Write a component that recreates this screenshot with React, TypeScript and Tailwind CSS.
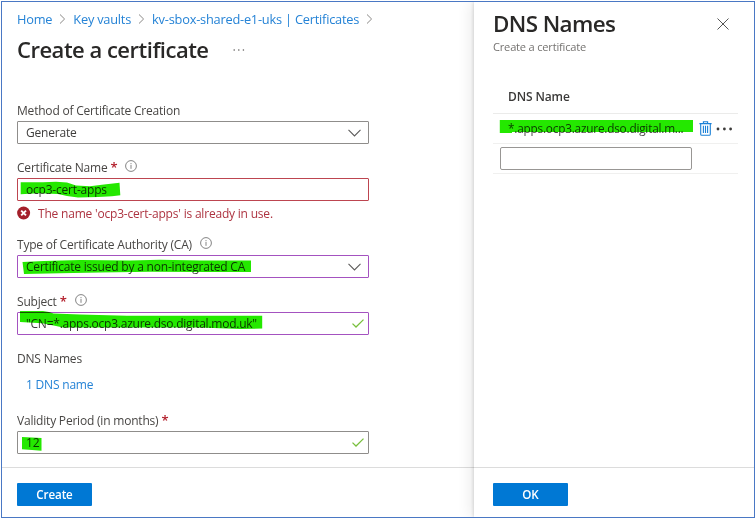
import type { ReactNode } from 'react';

function Crumb({ children }: { children: string }) {
  return (
    <>
      <a className="text-[#2583d6]">{children}</a>
      <svg className="mx-[7px] h-[10px] w-[7px]" viewBox="0 0 7 10" fill="none" stroke="#8a8886" strokeWidth="1">
        <path d="M1 0.5 5.6 5 1 9.5" />
      </svg>
    </>
  );
}

function InfoIcon() {
  return (
    <svg className="size-[12px]" viewBox="0 0 12 12" fill="none" stroke="#767676" strokeWidth="0.9">
      <circle cx="6" cy="6" r="5.4" />
      <path d="M6 5v3.8M6 3.1v1.1" />
    </svg>
  );
}

function Chevron() {
  return (
    <svg className="mr-[7px] h-[8px] w-[13px]" viewBox="0 0 13 8" fill="none" stroke="#5c5b5a" strokeWidth="1.1">
      <path d="M0.5 0.9 6.5 6.9 12.5 0.9" />
    </svg>
  );
}

function Check() {
  return (
    <svg className="mr-[4px] h-[9px] w-[12px]" viewBox="0 0 12 9" fill="none" stroke="#78bf3c" strokeWidth="1.3">
      <path d="M0.5 4.6 4 8 11.5 0.6" />
    </svg>
  );
}

function Label({ children, required, info }: { children: string; required?: boolean; info?: boolean }) {
  return (
    <div className="flex h-4 items-start leading-4 text-[#484644]">
      <span className="pt-px">{children}</span>
      {required && <span className="ml-[3px] text-[13px] font-semibold text-[#b3202c]">*</span>}
      {info && (
        <span className="mt-px ml-[8px]">
          <InfoIcon />
        </span>
      )}
    </div>
  );
}

function Field({ children, className, icon }: { children: ReactNode; className: string; icon?: ReactNode }) {
  return (
    <div className={'flex h-[23px] w-[352px] items-center justify-between rounded-[1px] border pl-[8px] ' + className}>
      <span className="pt-px">{children}</span>
      {icon}
    </div>
  );
}

/* Marker strokes drawn over the entered values. */
function Highlights() {
  return (
    <svg className="pointer-events-none absolute top-0 left-0 h-[519px] w-[756px] mix-blend-multiply" viewBox="0 0 756 519" fill="#24e800">
      <path d="M20.7 182.3H43L56 181.7 67 182.6 76 185.4 90 186.2 104 184.4 119.5 182.7 120.3 195.2 112 196.2 98 197 78 197.6 67 196 58 194 38 193.2 20.7 194.2Z" />
      <path d="M22.5 262 44 261 80 260 130 260.6 160 259.8 200 260.4H251V272H196L150 271.7 100 272.4 60 273.2 24 274Z" />
      <path d="M20 311H43L49 312 53.5 313.6 80 314.4 127 315.8H262.2V328.6L240 329 200 327.6H63L56 326 42 323.2 20 322Z" />
      <path d="M22 437 41.5 438V450.7L32 450 22 449.2Z" />
      <path d="M499.8 120H693V132H512V133H499.8Z" />
    </svg>
  );
}

export default function App() {
  return (
    <div className="relative h-[519px] w-[756px] bg-white p-px font-['Open_Sans','Noto_Sans',sans-serif] whitespace-nowrap">
      <div className="flex h-[517px] w-[754px] overflow-hidden border border-[#4a78c4]">
        <main className="flex w-[472px] flex-col">
          <div className="flex h-[465px] flex-col pl-[15px] text-[12px] leading-4 tracking-[-0.2px] text-[#3f3e3d]">
            <nav className="mt-[9px] flex h-4 items-center text-[12.8px] leading-4 tracking-[-0.22px]">
              <Crumb>Home</Crumb>
              <Crumb>Key vaults</Crumb>
              <Crumb>kv-sbox-shared-e1-uks | Certificates</Crumb>
            </nav>
            <div className="mt-[8px] flex h-7 items-center">
              <h1 className="text-[22px] leading-7 font-semibold tracking-[-0.5px] text-[#292827]">Create a certificate</h1>
              <svg className="mt-[2px] ml-[24px] h-[2px] w-[12px]" viewBox="0 0 12 2" fill="#605e5c">
                <circle cx="1.2" cy="1" r="0.8" />
                <circle cx="5.8" cy="1" r="0.8" />
                <circle cx="10.4" cy="1" r="0.8" />
              </svg>
            </div>

            <div className="mt-[39px] flex flex-col gap-[3px]">
              <Label>Method of Certificate Creation</Label>
              <Field className="border-[#8f8d8b]" icon={<Chevron />}>Generate</Field>
            </div>

            <div className="mt-[15px] flex flex-col gap-[3px]">
              <Label required info>Certificate Name</Label>
              <Field className="border-[#bd4550]">ocp3-cert-apps</Field>
              <div className="mt-px flex h-4 items-center text-[#ad3340]">
                <svg className="mr-[7px] size-[14px]" viewBox="0 0 14 14">
                  <circle cx="6.6" cy="7" r="6.5" fill="#a4202b" />
                  <path d="M4.2 4.6 9 9.4M9 4.6 4.2 9.4" stroke="#fff" strokeWidth="1.9" />
                </svg>
                <span className="pt-[2px]">The name &apos;ocp3-cert-apps&apos; is already in use.</span>
              </div>
            </div>

            <div className="mt-[15px] flex flex-col gap-[3px]">
              <Label info>Type of Certificate Authority (CA)</Label>
              <Field className="border-[#a452c0]" icon={<Chevron />}>Certificate issued by a non-integrated CA</Field>
            </div>

            <div className="mt-[15px] flex flex-col gap-[3px]">
              <Label required info>Subject</Label>
              <Field className="border-[#a452c0]" icon={<Check />}>
                <span className="tracking-[-0.24px]">&quot;CN=*.apps.ocp3.azure.dso.digital.mod.uk&quot;</span>
              </Field>
            </div>

            <div className="mt-[15px] flex flex-col gap-[10px]">
              <Label>DNS Names</Label>
              <a className="ml-[9px] h-4 pt-px text-[#2583d6]">1 DNS name</a>
            </div>

            <div className="mt-[20px] flex flex-col gap-[3px]">
              <Label required>Validity Period (in months)</Label>
              <Field className="border-[#8f8d8b]" icon={<Check />}>12</Field>
            </div>
          </div>
          <footer className="flex-1 border-t border-[#dcdcdc] pt-[15px] pl-[15px]">
            <button className="block h-[23px] w-[75px] rounded-[1px] bg-[#0078d4] text-[11.6px] leading-[22px] font-semibold tracking-[-0.1px] text-white">Create</button>
          </footer>
        </main>

        <aside className="flex flex-1 flex-col bg-white shadow-[-1px_0_3px_rgba(0,0,0,0.12),-3px_0_14px_rgba(0,0,0,0.09)]">
          <div className="flex h-[465px] flex-col pr-[16px] pl-[19px]">
            <div className="mt-[7px] flex justify-between">
              <h2 className="text-[22.4px] leading-[30px] font-semibold tracking-[-0.6px] text-[#292827]">DNS Names</h2>
              <svg className="mt-[9px] mr-[9px] size-[12px]" viewBox="0 0 12 12" stroke="#555" strokeWidth="1">
                <path d="M0.5 0.5 11.5 11.5M11.5 0.5 0.5 11.5" />
              </svg>
            </div>
            <p className="text-[11.1px] leading-4 tracking-[-0.2px] text-[#757371]">Create a certificate</p>

            <div className="mt-[33px] flex h-[26px] items-start border-b border-[#ebebea] pt-px pl-[15px] text-[12px] leading-4 font-semibold tracking-[-0.12px] text-[#3b3a39]">DNS Name</div>
            <div className="flex h-[30px] items-center border-b border-[#f0f0ef] pl-[15px] text-[11.8px] tracking-[-0.21px] text-[#484644]">
              <span className="w-[191px]">*.apps.ocp3.azure.dso.digital.m...</span>
              <svg className="h-[15px] w-[13px]" viewBox="0 0 13 15" fill="none" stroke="#1b80d6" strokeWidth="1.1">
                <path d="M0.4 2.6H12.6M4.4 2.4V.8H8.6V2.4M1.7 2.8V13.2Q1.7 14.3 2.8 14.3H10.2Q11.3 14.3 11.3 13.2V2.8M4.4 4.8V12.1M6.5 4.8V12.1M8.6 4.8V12.1" />
              </svg>
              <svg className="ml-[4px] h-[4px] w-[17px]" viewBox="0 0 17 4" fill="#3b3a39">
                <circle cx="2" cy="2" r="1.4" />
                <circle cx="8.4" cy="2" r="1.4" />
                <circle cx="14.6" cy="2" r="1.4" />
              </svg>
            </div>
            <div className="flex h-[30px] items-center border-b border-[#f0f0ef] pl-[7px]">
              <div className="h-[23px] w-[192px] rounded-[2px] border border-[#989694]" />
            </div>
          </div>
          <footer className="flex-1 border-t border-[#dcdcdc] pt-[15px] pl-[19px]">
            <button className="block h-[23px] w-[75px] rounded-[1px] bg-[#0078d4] text-[11.6px] leading-[22px] font-semibold text-white">OK</button>
          </footer>
        </aside>
      </div>
      <Highlights />
    </div>
  );
}
